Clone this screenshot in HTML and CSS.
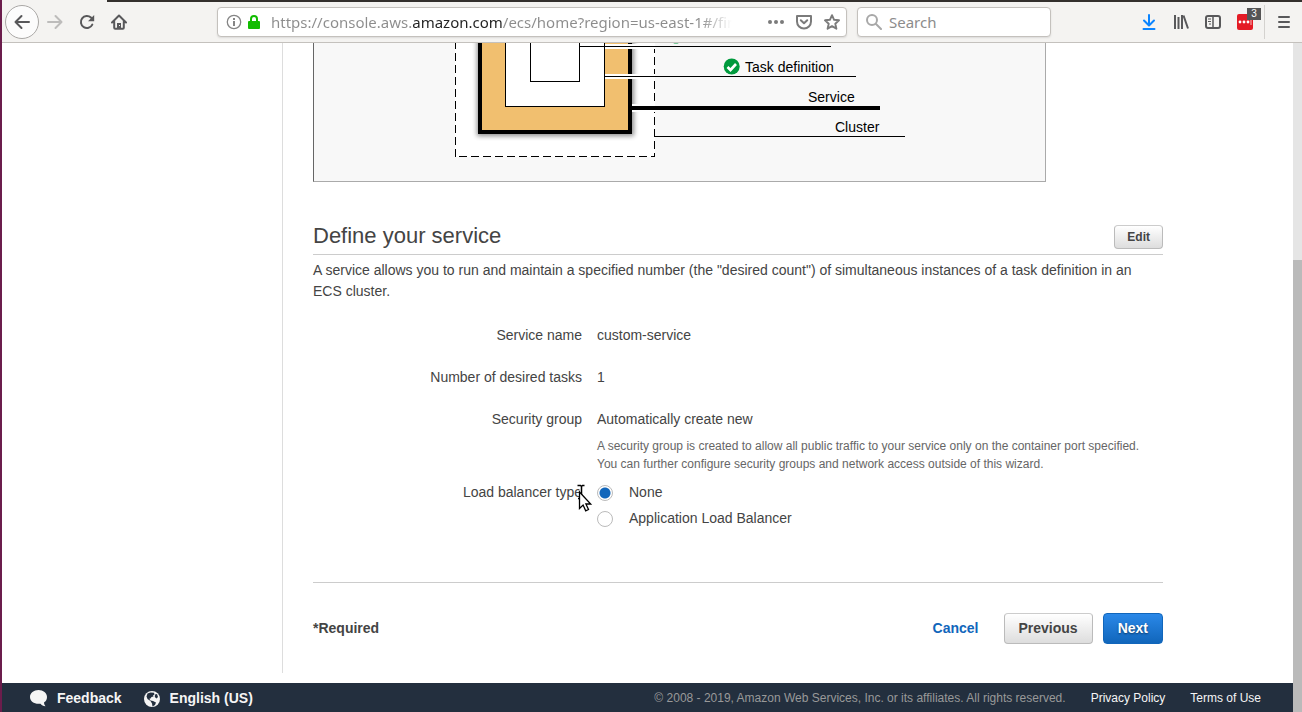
FILE: index.html
```
<!DOCTYPE html>
<html lang="en">
<head>
<meta charset="utf-8">
<title>Amazon ECS</title>
<link rel="stylesheet" href="styles.css">
</head>
<body>
<header class="toolbar">
  <nav class="nav-buttons" aria-label="Browser navigation">
    <button class="icon-button back" aria-label="Back"><svg width="16" height="16" viewBox="0 0 16 16"><path d="M15 8H2M7.500 2L1.500 8l6 6" fill="none" stroke="#58585a" stroke-width="2" stroke-linecap="round" stroke-linejoin="round"/></svg></button>
    <button class="icon-button" aria-label="Forward"><svg width="16" height="16" viewBox="0 0 16 16"><path d="M1 8h13M8.500 2l6 6-6 6" fill="none" stroke="#bdbcbb" stroke-width="2" stroke-linecap="round" stroke-linejoin="round"/></svg></button>
    <button class="icon-button" aria-label="Reload"><svg width="16" height="16" viewBox="0 0 16 16"><path d="M13.300 10.600A6 6 0 1 1 12 3.600l1.500 1.500" fill="none" stroke="#58585a" stroke-width="2" stroke-linecap="round"/><path d="M15.200 1v6.200H9z" fill="#58585a"/></svg></button>
    <button class="icon-button" aria-label="Home"><svg width="16" height="16" viewBox="0 0 16 16"><path d="M1 8.500L8 1.500l7 7M3.200 7.500v6.300q0 1 1 1h7.600q1 0 1-1V7.500" fill="none" stroke="#58585a" stroke-width="2" stroke-linecap="round" stroke-linejoin="round"/><path d="M6 9h4v5H6z" fill="#58585a"/><path d="M8 11h1v1H8z" fill="#f4f3f1"/></svg></button>
  </nav>
  <div class="field address">
    <svg width="16" height="16" viewBox="0 0 16 16"><circle cx="8" cy="8" r="6.700" fill="none" stroke="#858585" stroke-width="1.300"/><path d="M7 4h2v2H7zM7 7h2v5H7z" fill="#858585"/></svg>
    <svg class="lock" width="12" height="16" viewBox="0 0 12 16"><path d="M3 8V5a3 3 0 0 1 6 0v3" fill="none" stroke="#12bc00" stroke-width="2"/><rect y="7" width="12" height="8" rx="1" fill="#12bc00"/></svg>
    <input class="address-input" type="text" aria-label="Address" value="https://console.aws.amazon.com/ecs/home?region=us-east-1#/first">
    <div class="address-actions">
      <button class="icon-button" aria-label="Page actions"><svg width="16" height="16" viewBox="0 0 16 16" fill="#7b7b7b"><circle cx="2" cy="8" r="2"/><circle cx="8" cy="8" r="2"/><circle cx="14" cy="8" r="2"/></svg></button>
      <button class="icon-button" aria-label="Save to Pocket"><svg width="16" height="16" viewBox="0 0 16 16" fill="none" stroke="#7b7b7b" stroke-width="2" stroke-linecap="round" stroke-linejoin="round"><path d="M1 2h14v5.500a7 7 0 0 1-14 0z"/><path d="M4.800 6.300L8 9.300l3.200-3"/></svg></button>
      <button class="icon-button" aria-label="Bookmark"><svg width="16" height="16" viewBox="0 0 16 16"><path d="M8 1.200l2.100 4.600 4.900.5-3.700 3.400 1.100 5L8 12.200l-4.400 2.500 1.100-5L1 6.300l4.900-.5z" fill="none" stroke="#7b7b7b" stroke-width="1.900" stroke-linejoin="round"/></svg></button>
    </div>
  </div>
  <div class="field search">
    <svg width="16" height="16" viewBox="0 0 16 16"><circle cx="6" cy="6" r="5" fill="none" stroke="#a8a8a8" stroke-width="2"/><path d="M10 10l5 5" stroke="#a8a8a8" stroke-width="2" stroke-linecap="round"/></svg>
    <input class="search-input" type="text" aria-label="Search" placeholder="Search">
  </div>
  <div class="tools">
    <button class="icon-button" aria-label="Downloads"><svg width="16" height="16" viewBox="0 0 16 16" fill="none" stroke="#0a84ff" stroke-width="2" stroke-linecap="round" stroke-linejoin="round"><path d="M8 1v10M3 6.500l5 5 5-5M2.500 15h11"/></svg></button>
    <button class="icon-button" aria-label="Library"><svg width="16" height="16" viewBox="0 0 16 16" fill="none" stroke="#58585a" stroke-width="2"><path d="M2 1v14M5.500 3v12M9 1v14M10.500 1.500l4.500 13"/></svg></button>
    <button class="icon-button" aria-label="Sidebars"><svg width="16" height="16" viewBox="0 0 16 16" fill="none" stroke="#58585a"><rect x="1" y="2" width="14" height="12" rx="2" stroke-width="2"/><path d="M8 2v12" stroke-width="1.500"/><path d="M3 5h3M3 7.500h3M4 10h2" stroke-width="1"/></svg></button>
    <button class="icon-button extension" aria-label="Password manager"><svg width="16" height="16" viewBox="0 0 16 16"><rect width="16" height="16" rx="2" fill="#e41b25"/><g fill="#fff"><circle cx="3" cy="8" r="1.400"/><circle cx="7" cy="8" r="1.400"/><circle cx="11" cy="8" r="1.400"/><path d="M13.500 6h1v5h-1z" opacity=".7"/></g></svg><span class="badge">3</span></button>
    <span class="separator"></span>
    <button class="icon-button" aria-label="Menu"><svg width="16" height="16" viewBox="0 0 16 16"><path d="M3 3h10M3 8h10M3 13h10" stroke="#58585a" stroke-width="2" stroke-linecap="round"/></svg></button>
  </div>
</header>

<div class="viewport">
  <div class="page">
    <div class="columns">
      <aside class="sidebar"></aside>
      <main class="content">
        <figure class="diagram">
          <svg width="731" height="138" viewBox="314 43 731 138" role="img" aria-label="Task definition, service and cluster">
            <defs><filter id="shadow" x="-10%" y="-10%" width="120%" height="120%"><feGaussianBlur stdDeviation="2.500"/></filter></defs>
            <rect x="455" y="0" width="200" height="157" fill="#fff"/>
            <path d="M455.500 41v116" stroke="#000" stroke-dasharray="8 4"/>
            <path d="M459 156.500h196" stroke="#000" stroke-dasharray="8 4"/>
            <path d="M654.500 45v112" stroke="#000" stroke-dasharray="8 4"/>
            <rect x="477" y="0" width="157" height="136" fill="#000" opacity=".45" filter="url(#shadow)"/>
            <rect x="480" y="0" width="150" height="132" fill="#f1bf6f" stroke="#000" stroke-width="4"/>
            <rect x="505.500" y="0.500" width="99" height="106" fill="#fff" stroke="#000"/>
            <rect x="530.500" y="0.500" width="49" height="81" fill="#fff" stroke="#000"/>
            <path d="M605 44h50v5h-50zM605 74h50v5h-50zM632 104h23v8h-23z" fill="#fff"/>
            <path d="M580 46.500h251M605 76.500h251M655 136.500h250" stroke="#000"/>
            <path d="M632 108h248" stroke="#000" stroke-width="4"/>
            <circle cx="676" cy="35.500" r="8" fill="#009a3d"/>
            <circle cx="731.700" cy="66.500" r="8" fill="#009a3d"/>
            <path d="M727.500 67l3 3 5.500-6" fill="none" stroke="#fff" stroke-width="2.600"/>
            <text class="diagram-text" x="745" y="72">Task definition</text>
            <text class="diagram-text" x="808" y="102">Service</text>
            <text class="diagram-text" x="835" y="132">Cluster</text>
          </svg>
        </figure>

        <div class="section-head">
          <h2 class="section-title">Define your service</h2>
          <button class="button small">Edit</button>
        </div>
        <p class="intro">A service allows you to run and maintain a specified number (the "desired count") of simultaneous instances of a task definition in an ECS cluster.</p>

        <div class="rows">
          <div class="row"><span class="label">Service name</span><span>custom-service</span></div>
          <div class="row"><span class="label">Number of desired tasks</span><span>1</span></div>
          <div class="row last"><span class="label">Security group</span>
            <div>Automatically create new
              <p class="hint">A security group is created to allow all public traffic to your service only on the container port specified. You can further configure security groups and network access outside of this wizard.</p>
            </div>
          </div>
          <div class="row last" role="radiogroup" aria-labelledby="lb">
            <span class="label" id="lb">Load balancer type<svg class="pointer" width="18" height="30" viewBox="0 0 18 30" aria-hidden="true"><path d="M2 1.500h6M5 2v13M2 15.500h4" stroke="#fff" stroke-width="3" fill="none"/><path d="M1.500 1.500h3l1 1 1-1h2M5.500 2v13M2 14.500h3" stroke="#000" stroke-width="1.500" fill="none"/><path d="M3.500 8v16.500l3.600-3.400 2.600 5.700 2.800-1.300-2.600-5.500h4.800z" fill="#fff" stroke="#000" stroke-width="1.300"/></svg></span>
            <div class="options">
              <label class="option"><input class="radio" type="radio" name="lb" checked>None</label>
              <label class="option"><input class="radio" type="radio" name="lb">Application Load Balancer</label>
            </div>
          </div>
        </div>

        <div class="actions">
          <span class="required">*Required</span>
          <a class="cancel" href="#">Cancel</a>
          <button class="button">Previous</button>
          <button class="button primary">Next</button>
        </div>
      </main>
    </div>
    <footer class="footer">
      <a class="footer-main" href="#"><svg width="17" height="17" viewBox="0 0 17 17"><path d="M8.500 0C3.800 0 0 3 0 6.900s3.800 6.900 8.500 6.900l2-.1c1 1.500 2.900 2.500 5 2.500-1-1-1.500-2.300-1.400-3.900C15.900 11.100 17 9.300 17 6.900 17 3 13.200 0 8.500 0z" fill="#f5f5f5"/></svg>Feedback</a>
      <a class="footer-main" href="#"><svg width="16" height="16" viewBox="0 0 16 16"><circle cx="8" cy="8" r="8" fill="#f5f5f5"/><path d="M3.500 2.500l3-1 3.500.2.500 1.800-1.500 1 .5 1-2 .5-1 1.500-1.200.3 1.200 1.700 2.500.5 3 1.500-1 2.500-2.500 1.500-.5-3-1.500-2.500-3-2-1-2.500zM11 3.500l2-.5 1 3-1.500 1.500-1.700-1.500z" fill="#232f3e"/></svg>English (US)</a>
      <span class="copyright">© 2008 - 2019, Amazon Web Services, Inc. or its affiliates. All rights reserved.</span>
      <a class="footer-link" href="#">Privacy Policy</a>
      <a class="footer-link" href="#">Terms of Use</a>
    </footer>
  </div>
  <div class="scrollbar"><div class="thumb"></div></div>
</div>
</body>
</html>
```
FILE: styles.css
```
* { box-sizing: border-box; }

body {
  margin: 0;
  min-height: 100vh;
  display: flex;
  flex-direction: column;
  border-left: 2px solid #6b1d4c;
  background: #fff;
  color: #444;
  font: 14px/21px "Liberation Sans", Arial, sans-serif;
}

button, input { font: inherit; color: inherit; }
a { text-decoration: none; }
svg { display: block; flex: none; }

/* Browser toolbar */
.toolbar {
  display: flex;
  align-items: center;
  height: 43px;
  padding: 2px 10px 0 3px;
  border-bottom: 1px solid #c4c1bd;
  background: linear-gradient(#33302d, #33302d) 105px 0 / 100% 2px no-repeat #f4f3f1;
}

.nav-buttons { display: flex; align-items: center; gap: 16px; }

.icon-button {
  width: 16px;
  height: 16px;
  padding: 0;
  border: 0;
  background: none;
}

.icon-button.back {
  width: 34px;
  height: 34px;
  margin-right: -8px;
  padding-left: 8px;
  border: 1px solid #aaa8a6;
  border-radius: 50%;
  background: #fcfcfc;
}

.field {
  display: flex;
  align-items: center;
  height: 30px;
  border: 1px solid #c4c1bd;
  border-radius: 4px;
  background: #fff;
  box-shadow: 0 1px 2px #0000001a;
}

.address { flex: 1; margin-left: 90px; padding: 0 6px 0 8px; }
.lock { margin: 0 11px 0 6px; }

.address-input, .search-input {
  min-width: 0;
  flex: 1;
  height: 24px;
  padding: 0;
  border: 0;
  outline: 0;
  background: none;
  font: 15px/24px "Noto Sans", "Open Sans", sans-serif;
}

.address-input {
  color: transparent;
  background: linear-gradient(90deg, #8c8c8c 141px, #222 141px 231px, #8c8c8c 231px calc(100% - 32px), #fff) text;
  -webkit-background-clip: text;
}

.address-actions { display: flex; gap: 12px; margin-left: 36px; }

.search { width: 194px; margin-left: 10px; padding: 0 8px; gap: 7px; }
.search-input::placeholder { color: #8c8c8c; opacity: 1; }

.tools { display: flex; align-items: center; gap: 16px; margin-left: 90px; }
.extension { position: relative; }

.badge {
  position: absolute;
  left: 10px;
  top: -6px;
  width: 14px;
  height: 12px;
  background: #555;
  color: #fff;
  font-size: 10px;
  line-height: 12px;
  text-align: center;
}

.separator { width: 1px; height: 34px; margin: 0 -5px; background: #d4d2cf; }

/* Page */
.viewport { flex: 1; display: flex; }
.page { flex: 1; display: flex; flex-direction: column; }
.columns { flex: 1; display: flex; margin-bottom: 10px; }
.sidebar { width: 281px; border-right: 1px solid #ddd; }
.content { flex: 1; max-width: 880px; padding: 0 0 29px 30px; }

.scrollbar { width: 9px; padding-top: 217px; background: #e5e5e5; }
.thumb { height: 100%; background: #bababa; }

.diagram {
  width: fit-content;
  margin: 0;
  border: 1px solid #aaa;
  border-top: 0;
  border-left-color: #666;
  background: #f8f8f8;
}

.diagram-text { font: 14px "Liberation Sans", Arial, sans-serif; fill: #000; }

.section-head {
  display: flex;
  justify-content: space-between;
  margin-top: 43px;
  padding-bottom: 5px;
  border-bottom: 1px solid #ccc;
}

.section-title { margin: 0; font-size: 22px; line-height: 22px; font-weight: normal; }

.button {
  height: 31px;
  padding: 0 14px;
  border: 1px solid #bbb;
  border-top-color: #ccc;
  border-radius: 4px;
  background: linear-gradient(#fff, #ddd);
  color: #444;
  font-weight: bold;
}

.button.small { height: 24px; padding: 0 12px; font-size: 12px; }

.button.primary {
  border-color: #1166bb;
  background: linear-gradient(#2a88e8, #1166bb);
  color: #fff;
  text-shadow: 0 1px 2px #00000080;
}

.intro { margin: 5px 0 23px; }

.row {
  display: grid;
  grid-template-columns: 269px 1fr;
  gap: 15px;
  margin-bottom: 21px;
}

.row.last { margin-bottom: 9px; }
.label { position: relative; text-align: right; }
.hint { max-width: 560px; margin: 7px 0 0; color: #666; font-size: 12px; line-height: 18px; }
.options { display: grid; gap: 5px; }
.option { display: flex; align-items: center; gap: 16px; }

.radio {
  appearance: none;
  width: 16px;
  height: 16px;
  margin: 0;
  border: 1px solid #bbb;
  border-radius: 50%;
  background: #fff;
}

.radio:checked { background: radial-gradient(circle, #1166bb 5px, #fff 6px); }

.pointer { position: absolute; right: -12px; top: 2px; }

.actions {
  display: flex;
  align-items: center;
  gap: 10px;
  margin-top: 53px;
  padding-top: 30px;
  border-top: 1px solid #ccc;
}

.required { flex: 1; font-weight: bold; }
.cancel { margin-right: 15px; color: #1166bb; font-weight: bold; }

.footer {
  display: flex;
  align-items: center;
  gap: 22px;
  height: 29px;
  padding: 2px 32px 0 28px;
  background: #232f3e;
  font-size: 12px;
}

.footer-main {
  display: flex;
  align-items: center;
  gap: 10px;
  color: #f5f5f5;
  font-size: 14px;
  font-weight: bold;
}

.copyright { margin-left: auto; color: #999; }
.footer-link { margin-left: 3px; color: #f5f5f5; }
```
